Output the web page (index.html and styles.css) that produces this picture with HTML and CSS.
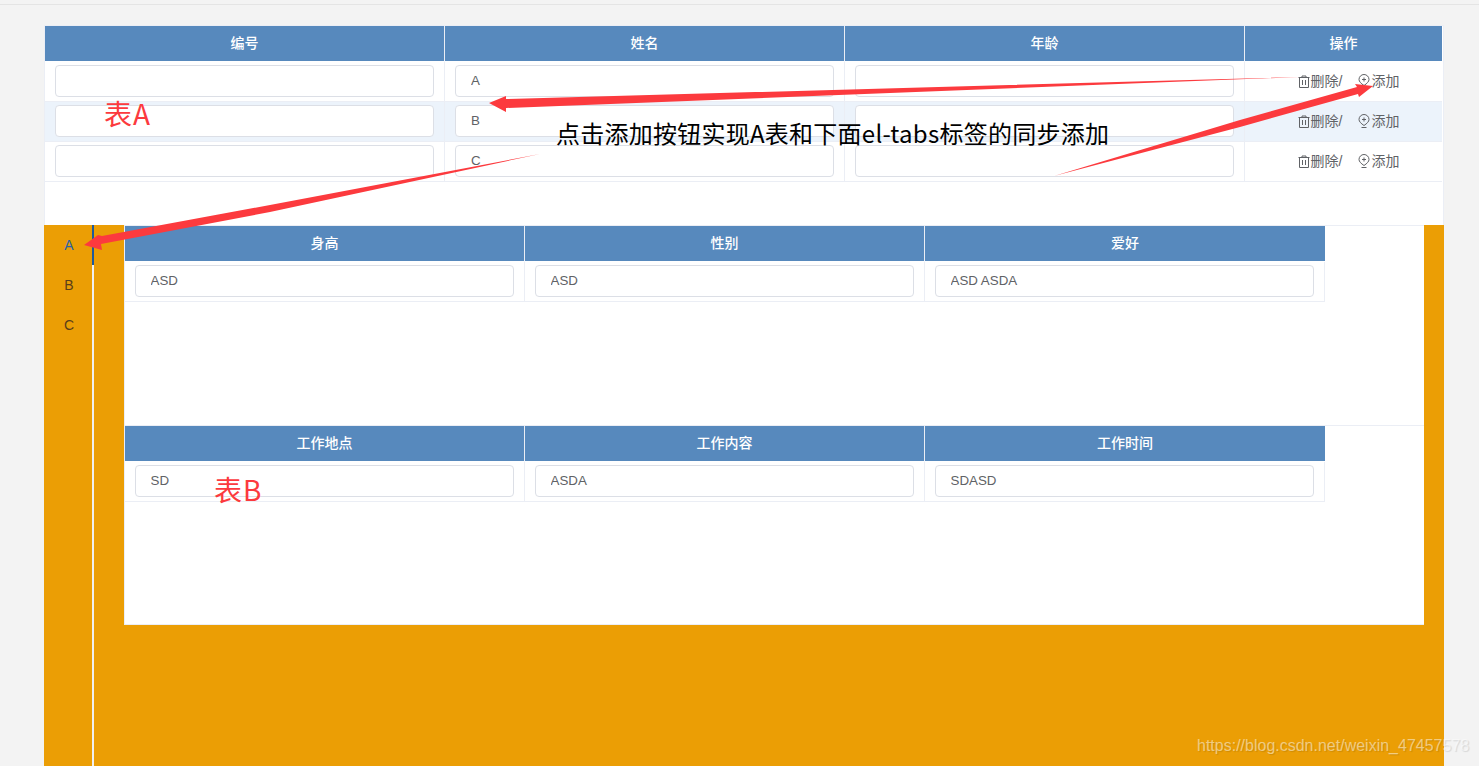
FILE: index.html
```html
<!DOCTYPE html>
<html lang="en">
<head>
    <meta charset="UTF-8">
    <title>表A 表B</title>
    <link rel="stylesheet" href="styles.css">
</head>
<body>

<div class="topline"></div>

<div class="page">

    <div class="tableA">
        <table class="tbl">
            <tr>
                <th class="w400">编号</th>
                <th class="w400">姓名</th>
                <th class="w400">年龄</th>
                <th>操作</th>
            </tr>
            <tr>
                <td><input class="inp"></td>
                <td><input class="inp" value="A"></td>
                <td><input class="inp"></td>
                <td class="ops">
                    <svg class="ico" viewBox="0 0 12 13"><path d="M4 2.500V1h4v1.500M.5 2.500h11M1.500 2.500v10h9v-10M4.500 5v5M7.500 5v5"/></svg><span>删除/</span>
                    <svg class="ico ico2" viewBox="0 0 12 14"><path d="M6 11.500C3 9.500 1 7.500 1 5.500a5 5 0 0 1 10 0C11 7.500 9 9.500 6 11.500zM6 3.500v4M4 5.500h4M3.500 13.500h5"/></svg><span>添加</span>
                </td>
            </tr>
            <tr class="hl">
                <td><input class="inp"></td>
                <td><input class="inp" value="B"></td>
                <td><input class="inp"></td>
                <td class="ops">
                    <svg class="ico" viewBox="0 0 12 13"><path d="M4 2.500V1h4v1.500M.5 2.500h11M1.500 2.500v10h9v-10M4.500 5v5M7.500 5v5"/></svg><span>删除/</span>
                    <svg class="ico ico2" viewBox="0 0 12 14"><path d="M6 11.500C3 9.500 1 7.500 1 5.500a5 5 0 0 1 10 0C11 7.500 9 9.500 6 11.500zM6 3.500v4M4 5.500h4M3.500 13.500h5"/></svg><span>添加</span>
                </td>
            </tr>
            <tr>
                <td><input class="inp"></td>
                <td><input class="inp" value="C"></td>
                <td><input class="inp"></td>
                <td class="ops">
                    <svg class="ico" viewBox="0 0 12 13"><path d="M4 2.500V1h4v1.500M.5 2.500h11M1.500 2.500v10h9v-10M4.500 5v5M7.500 5v5"/></svg><span>删除/</span>
                    <svg class="ico ico2" viewBox="0 0 12 14"><path d="M6 11.500C3 9.500 1 7.500 1 5.500a5 5 0 0 1 10 0C11 7.500 9 9.500 6 11.500zM6 3.500v4M4 5.500h4M3.500 13.500h5"/></svg><span>添加</span>
                </td>
            </tr>
        </table>
    </div>

    <div class="tabs">
        <div class="tabnav">
            <div class="tab active">A</div>
            <div class="tab">B</div>
            <div class="tab">C</div>
        </div>
        <div class="tabmain">
            <div class="panel">
                <table class="tbl small">
                    <tr>
                        <th>身高</th>
                        <th>性别</th>
                        <th>爱好</th>
                    </tr>
                    <tr>
                        <td><input class="inp" value="ASD"></td>
                        <td><input class="inp" value="ASD"></td>
                        <td><input class="inp" value="ASD ASDA"></td>
                    </tr>
                </table>
            </div>
            <div class="panel">
                <table class="tbl small">
                    <tr>
                        <th>工作地点</th>
                        <th>工作内容</th>
                        <th>工作时间</th>
                    </tr>
                    <tr>
                        <td><input class="inp" value="SD"></td>
                        <td><input class="inp" value="ASDA"></td>
                        <td><input class="inp" value="SDASD"></td>
                    </tr>
                </table>
            </div>
        </div>
    </div>
</div>

<!-- annotations drawn on top of the screenshot -->
<svg class="arrows" viewBox="0 0 1479 766">
    <polygon points="1300,77 506,99 506,96 489,103 506,112 506,108"/>
    <polygon points="1054,176 1240,120 1357,87 1355,84 1373,86 1359,97 1358,94 1240,127"/>
    <polygon points="540,154 270,205 102,236 98,235 84,245 102,250 101,244 270,212"/>
</svg>
<div class="note noteA">表A</div>
<div class="note noteB">表B</div>
<div class="note tip">点击添加按钮实现A表和下面el-tabs标签的同步添加</div>
<div class="mark">https://blog.csdn.net/weixin_47457578</div>

</body>
</html>
```

FILE: styles.css
```css
html, body{
    margin: 0;
    height: 766px;
    overflow: hidden;
}
body{
    background-color: #f3f3f3;
    font-family: "Liberation Sans", "Noto Sans CJK SC", sans-serif;
    font-size: 14px;
    color: #606266;
}

.topline{
    height: 4px;
    border-bottom: 1px solid #e4e4e4;
}

.page{
    width: 1400px;
    margin: 20px 0 0 44px;
}

.tableA{
    height: 199px;
    width: 1398px;
    background-color: #fff;
    border: 1px solid #ebeef5;
}

.tbl{
    border-collapse: separate;
    border-spacing: 0;
    table-layout: fixed;
    width: 1397px;
}
.tbl.small{
    width: 1200px;
}
.w400{
    width: 400px;
}
.tbl th{
    height: 36px;
    padding: 0 0 4px;
    box-sizing: border-box;
    background-color: #5789bd;
    color: #fff;
    font-weight: 500;
    font-size: 14px;
    border-right: 1px solid #ebeef5;
    border-bottom: 1px solid #fff;
}
.tbl th:last-child{
    border-right: 0;
}
.tbl td{
    height: 40px;
    padding: 3px 10px 4px;
    box-sizing: border-box;
    border-right: 1px solid #ebeef5;
    border-bottom: 1px solid #ebeef5;
    background-color: #fff;
}
.tbl td:last-child{
    border-right: 0;
}
.small td:last-child{
    border-right: 1px solid #ebeef5;
}
.tbl .hl td{
    background-color: #ecf3fb;
}

.inp{
    display: block;
    width: 100%;
    height: 32px;
    box-sizing: border-box;
    padding: 0 15px 2px;
    border: 1px solid #dcdfe6;
    border-radius: 4px;
    background-color: #fff;
    color: #606266;
    font-family: inherit;
    font-size: 13.33px;
}
.small .inp{
    padding-left: 14.5px;
}

.tbl .ops{
    padding: 0 0 3px 10px;
    text-align: center;
    white-space: nowrap;
    font-size: 14px;
}
.ico{
    width: 12px;
    height: 13px;
    vertical-align: -2px;
    margin-right: 1px;
    fill: none;
    stroke: #606266;
    stroke-width: 1;
}
.ico2{
    height: 14px;
    margin-left: 12px;
}

.tabs{
    display: flex;
    height: 560px;
    margin-top: -1px;
    background-color: #eb9e05;
}
.tabnav{
    width: 48px;
    border-right: 2px solid #f0f0f0;
}
.tab{
    height: 40px;
    line-height: 40px;
    padding-left: 2px;
    text-align: center;
    font-size: 14px;
    color: #5a3d1a;
    position: relative;
}
.tab.active{
    color: #2a62a8;
}
.tab.active::after{
    content: "";
    position: absolute;
    top: 0;
    right: -2px;
    bottom: 0;
    width: 2px;
    background-color: #1f5a9c;
}

.tabmain{
    width: 1300px;
    margin-left: 30px;
}
.panel{
    height: 200px;
    box-sizing: border-box;
    background-color: #fff;
    border: 1px solid #ebeef5;
    border-width: 1px 0 0 1px;
}
.panel:last-child{
    border-bottom-width: 1px;
}

.arrows{
    position: absolute;
    left: 0;
    top: 0;
    width: 1479px;
    height: 766px;
}
.arrows polygon{
    fill: #fc3a3e;
}
.note{
    position: absolute;
    font-family: "Noto Sans CJK SC", sans-serif;
    white-space: nowrap;
}
.noteA, .noteB{
    color: #fc3a3e;
    font-size: 28px;
    line-height: 36px;
    letter-spacing: 1px;
}
.noteA{
    left: 104px;
    top: 95px;
}
.noteB{
    left: 214px;
    top: 471px;
}
.tip{
    left: 556px;
    top: 117px;
    color: #000;
    font-size: 24px;
    line-height: 32px;
    letter-spacing: 0.25px;
}
.mark{
    position: absolute;
    left: 1197px;
    top: 737px;
    font-size: 16px;
    color: rgba(255, 255, 255, 0.5);
    text-shadow: 1px 1px 1px rgba(0, 0, 0, 0.12);
    white-space: nowrap;
}
```
